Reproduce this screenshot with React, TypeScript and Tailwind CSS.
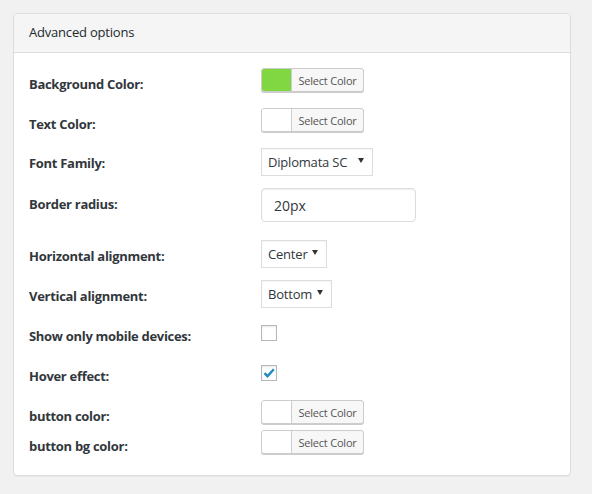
import React from 'react';

const font = { fontFamily: '"Open Sans", "Noto Sans", sans-serif' };

function ColorButton({ color }: { color?: string }) {
  return (
    <button
      type="button"
      className="flex h-[24px] w-[103px] items-stretch overflow-hidden rounded-[3px] border border-[#cccccc] bg-[#f7f7f7] p-0 shadow-[0_1px_0_#cccccc]"
    >
      <span
        className={`block w-[30px] border-r border-[#cccccc] ${color ? 'bg-[#81d742]' : 'bg-white'}`}
      />
      <span className="flex flex-1 items-center justify-center text-[11px] leading-none tracking-[-0.2px] text-[#555555]">
        Select Color
      </span>
    </button>
  );
}

function FakeSelect({ value, width }: { value: string; width: string }) {
  return (
    <div
      className={`flex h-[28px] ${width} items-center justify-between border border-[#dddddd] bg-white pt-[1px] pl-[6px] pr-[8px] text-[13px] tracking-[-0.2px] text-[#32373c] shadow-[inset_0_1px_2px_rgba(0,0,0,0.04)]`}
    >
      <span>{value}</span>
      <svg width="6" height="5" viewBox="0 0 6 5" className="mb-[4px]">
        <path d="M0 0 H6 L3 5 Z" fill="#333" />
      </svg>
    </div>
  );
}

function Checkbox({ checked }: { checked?: boolean }) {
  return (
    <span className="flex h-[16px] w-[16px] items-center justify-center border border-[#b4b9be] bg-white shadow-[inset_0_1px_2px_rgba(0,0,0,0.1)]">
      {checked && (
        <svg width="14" height="14" viewBox="0 0 14 14">
          <path d="M2.5 7.2 L5.5 10.2 L11.8 3.2" fill="none" stroke="#1e8cbe" strokeWidth="2.4" />
        </svg>
      )}
    </span>
  );
}

type Row = { label: string; control: React.ReactNode; h: string; mt: string; labelMt: string };

const rows: Row[] = [
  { label: 'Background Color:', control: <ColorButton color="#81d742" />, h: 'h-[24px]', mt: 'mt-[15px]', labelMt: 'mt-[7px]' },
  { label: 'Text Color:', control: <ColorButton />, h: 'h-[24px]', mt: 'mt-[16px]', labelMt: 'mt-[7px]' },
  { label: 'Font Family:', control: <FakeSelect value="Diplomata SC" width="w-[112px]" />, h: 'h-[28px]', mt: 'mt-[16px]', labelMt: 'mt-[6px]' },
  {
    label: 'Border radius:',
    control: (
      <div className="flex h-[34px] w-[155px] items-center rounded-[4px] border border-[#dddddd] bg-white pl-[12px] text-[14px] text-[#32373c] shadow-[inset_0_1px_2px_rgba(0,0,0,0.07)]">
        20px
      </div>
    ),
    h: 'h-[34px]',
    mt: 'mt-[12px]',
    labelMt: 'mt-[7px]',
  },
  { label: 'Horizontal alignment:', control: <FakeSelect value="Center" width="w-[66px]" />, h: 'h-[28px]', mt: 'mt-[18px]', labelMt: 'mt-[7px]' },
  { label: 'Vertical alignment:', control: <FakeSelect value="Bottom" width="w-[71px]" />, h: 'h-[28px]', mt: 'mt-[12px]', labelMt: 'mt-[7px]' },
  { label: 'Show only mobile devices:', control: <Checkbox />, h: 'h-[16px]', mt: 'mt-[17px]', labelMt: 'mt-[2px]' },
  { label: 'Hover effect:', control: <Checkbox checked />, h: 'h-[16px]', mt: 'mt-[24px]', labelMt: 'mt-[2px]' },
  { label: 'button color:', control: <ColorButton />, h: 'h-[24px]', mt: 'mt-[19px]', labelMt: 'mt-[7px]' },
  { label: 'button bg color:', control: <ColorButton />, h: 'h-[24px]', mt: 'mt-[6px]', labelMt: 'mt-[7px]' },
];

export default function App() {
  return (
    <div className="min-h-[494px] w-full bg-[#f1f1f1] pt-[13px] pl-[13px] pr-[21px]" style={font}>
      <div className="w-[558px] overflow-hidden rounded-[4px] border border-[#dddddd] bg-white shadow-[0_1px_1px_rgba(0,0,0,0.04)]">
        <div className="flex h-[39px] items-center border-b border-[#dddddd] bg-[#f5f5f5] px-[15px] text-[13px] tracking-[-0.2px] text-[#23282d]">
          Advanced options
        </div>
        <div className="px-[15px] pb-[21px]">
          {rows.map((r) => (
            <div key={r.label} className={`flex items-start ${r.h} ${r.mt}`}>
              <div
                className={`w-[232px] shrink-0 text-[13px] font-bold leading-[18px] tracking-[-0.3px] text-[#32373c] ${r.labelMt}`}
              >
                {r.label}
              </div>
              <div>{r.control}</div>
            </div>
          ))}
        </div>
      </div>
    </div>
  );
}
